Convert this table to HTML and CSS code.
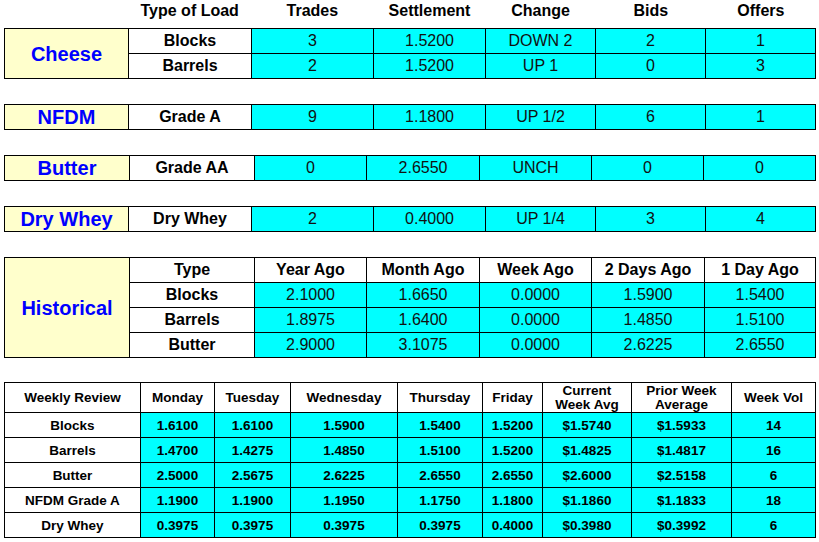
FILE: index.html
```html
<!DOCTYPE html>
<html>
<head>
<meta charset="utf-8">
<link rel="stylesheet" href="styles.css">
</head>
<body>
<div class="page">
  <table class="heads">
    <colgroup><col class="c1"><col class="c2"><col class="c3"><col class="c4"><col class="c5"><col class="c6"><col class="c7"></colgroup>
    <tr><td></td><td>Type of Load</td><td>Trades</td><td>Settlement</td><td>Change</td><td>Bids</td><td>Offers</td></tr>
  </table>

  <table class="grid">
    <colgroup><col class="c1"><col class="c2"><col class="c3"><col class="c4"><col class="c5"><col class="c6"><col class="c7"></colgroup>
    <tr><td class="label" rowspan="2">Cheese</td><td class="type">Blocks</td><td class="val">3</td><td class="val">1.5200</td><td class="val">DOWN 2</td><td class="val">2</td><td class="val">1</td></tr>
    <tr><td class="type">Barrels</td><td class="val">2</td><td class="val">1.5200</td><td class="val">UP 1</td><td class="val">0</td><td class="val">3</td></tr>
  </table>

  <table class="grid">
    <colgroup><col class="c1"><col class="c2"><col class="c3"><col class="c4"><col class="c5"><col class="c6"><col class="c7"></colgroup>
    <tr><td class="label">NFDM</td><td class="type">Grade A</td><td class="val">9</td><td class="val">1.1800</td><td class="val">UP 1/2</td><td class="val">6</td><td class="val">1</td></tr>
  </table>

  <table class="grid">
    <colgroup><col class="b1"><col class="b2"><col class="b3"><col class="b4"><col class="b5"><col class="b6"><col class="b7"></colgroup>
    <tr><td class="label">Butter</td><td class="type">Grade AA</td><td class="val">0</td><td class="val">2.6550</td><td class="val">UNCH</td><td class="val">0</td><td class="val">0</td></tr>
  </table>

  <table class="grid">
    <colgroup><col class="c1"><col class="c2"><col class="c3"><col class="c4"><col class="c5"><col class="c6"><col class="c7"></colgroup>
    <tr><td class="label">Dry Whey</td><td class="type">Dry Whey</td><td class="val">2</td><td class="val">0.4000</td><td class="val">UP 1/4</td><td class="val">3</td><td class="val">4</td></tr>
  </table>

  <table class="grid">
    <colgroup><col class="h1"><col class="h2"><col class="h3"><col class="h4"><col class="h5"><col class="h6"><col class="h7"></colgroup>
    <tr><td class="label" rowspan="4">Historical</td><td class="type">Type</td><td class="type">Year Ago</td><td class="type">Month Ago</td><td class="type">Week Ago</td><td class="type">2 Days Ago</td><td class="type">1 Day Ago</td></tr>
    <tr><td class="type">Blocks</td><td class="val">2.1000</td><td class="val">1.6650</td><td class="val">0.0000</td><td class="val">1.5900</td><td class="val">1.5400</td></tr>
    <tr><td class="type">Barrels</td><td class="val">1.8975</td><td class="val">1.6400</td><td class="val">0.0000</td><td class="val">1.4850</td><td class="val">1.5100</td></tr>
    <tr><td class="type">Butter</td><td class="val">2.9000</td><td class="val">3.1075</td><td class="val">0.0000</td><td class="val">2.6225</td><td class="val">2.6550</td></tr>
  </table>

  <table class="grid weekly">
    <colgroup><col class="w1"><col class="w2"><col class="w3"><col class="w4"><col class="w5"><col class="w6"><col class="w7"><col class="w8"><col class="w9"></colgroup>
    <tr class="whead"><td>Weekly Review</td><td>Monday</td><td>Tuesday</td><td>Wednesday</td><td>Thursday</td><td>Friday</td><td class="two">Current<br>Week Avg</td><td class="two">Prior Week<br>Average</td><td>Week Vol</td></tr>
    <tr><td>Blocks</td><td class="val">1.6100</td><td class="val">1.6100</td><td class="val">1.5900</td><td class="val">1.5400</td><td class="val">1.5200</td><td class="val">$1.5740</td><td class="val">$1.5933</td><td class="val">14</td></tr>
    <tr><td>Barrels</td><td class="val">1.4700</td><td class="val">1.4275</td><td class="val">1.4850</td><td class="val">1.5100</td><td class="val">1.5200</td><td class="val">$1.4825</td><td class="val">$1.4817</td><td class="val">16</td></tr>
    <tr><td>Butter</td><td class="val">2.5000</td><td class="val">2.5675</td><td class="val">2.6225</td><td class="val">2.6550</td><td class="val">2.6550</td><td class="val">$2.6000</td><td class="val">$2.5158</td><td class="val">6</td></tr>
    <tr><td>NFDM Grade A</td><td class="val">1.1900</td><td class="val">1.1900</td><td class="val">1.1950</td><td class="val">1.1750</td><td class="val">1.1800</td><td class="val">$1.1860</td><td class="val">$1.1833</td><td class="val">18</td></tr>
    <tr><td>Dry Whey</td><td class="val">0.3975</td><td class="val">0.3975</td><td class="val">0.3975</td><td class="val">0.3975</td><td class="val">0.4000</td><td class="val">$0.3980</td><td class="val">$0.3992</td><td class="val">6</td></tr>
  </table>
</div>
</body>
</html>
```

FILE: styles.css
```css
html, body {
  margin: 0;
  padding: 0;
  background: #ffffff;
}
body {
  font-family: "Liberation Sans", Arial, sans-serif;
  color: #000000;
}
.page {
  padding-left: 4px;
  width: 812px;
}
table {
  border-collapse: collapse;
  table-layout: fixed;
  width: 812px;
}
.heads td {
  height: 22px;
  padding: 0;
  font-size: 16px;
  font-weight: bold;
  line-height: 18px;
  text-align: center;
  vertical-align: middle;
}
.grid {
  margin-top: 25px;
}
.heads + .grid {
  margin-top: 6px;
}
.grid td {
  border: 1px solid #000000;
  height: 24px;
  padding: 0;
  text-align: center;
  vertical-align: middle;
  font-size: 16px;
  line-height: 18px;
  background: #ffffff;
}
.grid td.label {
  background: #ffffcc;
  color: #0000ff;
  font-size: 20px;
  font-weight: bold;
}
.grid td.type {
  font-weight: bold;
}
.grid td.val {
  background: #00ffff;
  color: #111111;
}
.c1 { width: 124px; }
.c2 { width: 123px; }
.c3 { width: 122px; }
.c4 { width: 112px; }
.c5 { width: 110px; }
.c6 { width: 110px; }
.c7 { width: 110px; }

.b1 { width: 125px; }
.b2 { width: 125px; }
.b3 { width: 112px; }
.b4 { width: 113px; }
.b5 { width: 112px; }
.b6 { width: 112px; }
.b7 { width: 112px; }

.h1 { width: 125px; }
.h2 { width: 125px; }
.h3 { width: 112px; }
.h4 { width: 113px; }
.h5 { width: 112px; }
.h6 { width: 113px; }
.h7 { width: 111px; }

.grid.weekly {
  margin-top: 24px;
}
.weekly td {
  font-size: 13.5px;
  font-weight: bold;
  line-height: 15px;
}
.weekly .whead td {
  height: 29px;
}
.weekly .whead td.two {
  line-height: 14px;
}
.weekly td.val {
  color: #000000;
}
.w1 { width: 136px; }
.w2 { width: 74px; }
.w3 { width: 76px; }
.w4 { width: 107px; }
.w5 { width: 85px; }
.w6 { width: 60px; }
.w7 { width: 89px; }
.w8 { width: 100px; }
.w9 { width: 84px; }
```
